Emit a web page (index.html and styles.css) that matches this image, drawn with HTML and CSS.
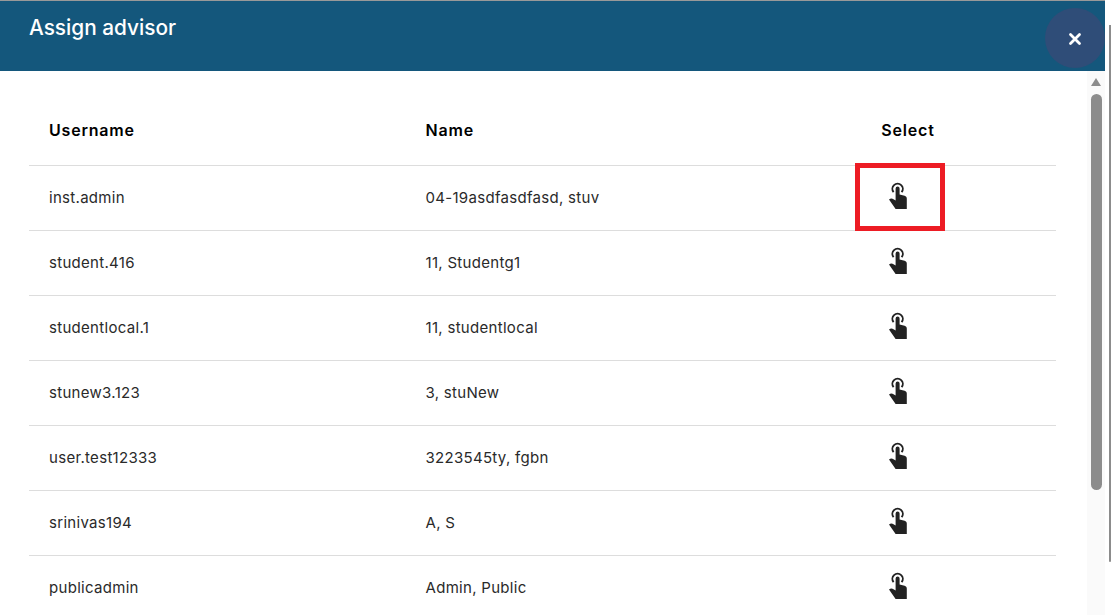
FILE: index.html
```html
<!DOCTYPE html>
<html lang="en">
<head>
<meta charset="utf-8">
<title>Assign advisor</title>
<link rel="stylesheet" href="styles.css">
</head>
<body>
<div class="modal">
  <header class="modal-header">
    <h1 class="modal-title">Assign advisor</h1>
    <button class="close-btn" aria-label="Close">
      <svg width="14" height="14" viewBox="0 0 14 14"><path d="M2.5 2.5L11.5 11.5M11.5 2.5L2.5 11.5" stroke="#fff" stroke-width="2.8" stroke-linecap="round"/></svg>
    </button>
  </header>
  <div class="modal-main">
    <div class="modal-body">
      <div class="table">
        <div class="row head"><div>Username</div><div>Name</div><div class="sel">Select</div></div>
        <div class="row"><div>inst.admin</div><div>04-19asdfasdfasd, stuv</div><div class="sel"><span class="pick marked"><svg class="hand" viewBox="0 0 22 28"><use href="#hand"/></svg></span></div></div>
        <div class="row"><div>student.416</div><div>11, Studentg1</div><div class="sel"><span class="pick"><svg class="hand" viewBox="0 0 22 28"><use href="#hand"/></svg></span></div></div>
        <div class="row"><div>studentlocal.1</div><div>11, studentlocal</div><div class="sel"><span class="pick"><svg class="hand" viewBox="0 0 22 28"><use href="#hand"/></svg></span></div></div>
        <div class="row"><div>stunew3.123</div><div>3, stuNew</div><div class="sel"><span class="pick"><svg class="hand" viewBox="0 0 22 28"><use href="#hand"/></svg></span></div></div>
        <div class="row"><div>user.test12333</div><div>3223545ty, fgbn</div><div class="sel"><span class="pick"><svg class="hand" viewBox="0 0 22 28"><use href="#hand"/></svg></span></div></div>
        <div class="row"><div>srinivas194</div><div>A, S</div><div class="sel"><span class="pick"><svg class="hand" viewBox="0 0 22 28"><use href="#hand"/></svg></span></div></div>
        <div class="row"><div>publicadmin</div><div>Admin, Public</div><div class="sel"><span class="pick"><svg class="hand" viewBox="0 0 22 28"><use href="#hand"/></svg></span></div></div>
      </div>
    </div>
    <div class="scroll-track">
      <span class="scroll-arrow"></span>
      <span class="scroll-thumb"></span>
    </div>
  </div>
</div>
<div class="page-scroll"></div>
<svg class="defs" width="0" height="0">
  <symbol id="hand" viewBox="0 0 22 28">
    <path d="M6.6 10.2A5.2 5.2 0 1 1 14.6 10.2" fill="none" stroke="#222" stroke-width="1.9"/>
    <path d="M8.6 16V6.6a2 2 0 0 1 4 0V12.6l5 1.2c1.3.4 2.2 1.3 2.2 2.6V27H8.6L2 17.6c1.5-1.3 3-1.4 4.5-.4l2.1 1.4z" fill="#222"/>
  </symbol>
</svg>
</body>
</html>
```
FILE: styles.css
```css
html, body {
  margin: 0;
  height: 100%;
  overflow: hidden;
  background: #fff;
}
body {
  display: flex;
  font-family: "Inter", "Liberation Sans", sans-serif;
  color: #222;
}
.defs {
  position: absolute;
}
.modal {
  width: 1105px;
  display: flex;
  flex-direction: column;
  height: 615px;
}
.modal-header {
  position: relative;
  height: 70px;
  flex: none;
  background: #14577c;
  border-top: 1px solid #999;
  padding: 0 29px;
  display: flex;
  align-items: flex-start;
}
.modal-title {
  margin: 14px 0 0;
  font-size: 20.8px;
  line-height: 26px;
  font-weight: 500;
  color: #fff;
}
.close-btn {
  position: absolute;
  right: 0;
  top: 7px;
  width: 60px;
  height: 60px;
  border: 0;
  border-radius: 50%;
  background: #2f4d78;
  display: flex;
  align-items: center;
  justify-content: center;
  padding: 2px 0 0;
}
.modal-main {
  flex: 1;
  display: flex;
  min-height: 0;
}
.modal-body {
  flex: 1;
  padding: 30px 31px 0 29px;
  overflow: hidden;
}
.table {
  display: flex;
  flex-direction: column;
}
.row {
  display: grid;
  grid-template-columns: 376.5px 1fr 200px;
  height: 65px;
  align-items: center;
  border-bottom: 1px solid #ddd;
  box-sizing: border-box;
  padding: 0 48px 2px 20px;
  font-size: 15px;
  letter-spacing: 0.3px;
  color: #2a2a2a;
}
.row.head {
  padding-bottom: 6px;
  font-weight: 600;
  font-size: 16px;
  letter-spacing: 0.8px;
  color: #000;
}
.sel {
  display: flex;
  justify-content: center;
  text-align: center;
}
.pick {
  position: relative;
  display: flex;
  margin-right: 21px;
  margin-top: -3px;
}
.hand {
  width: 22px;
  height: 28px;
}
.marked::after {
  content: "";
  position: absolute;
  left: -32px;
  top: -19px;
  width: 90px;
  height: 68px;
  box-sizing: border-box;
  border: 5px solid #ed1c24;
}
.scroll-track {
  width: 18px;
  flex: none;
  background: #fafafa;
  display: flex;
  flex-direction: column;
  align-items: center;
  padding-top: 7px;
}
.scroll-arrow {
  width: 0;
  height: 0;
  border-left: 5px solid transparent;
  border-right: 5px solid transparent;
  border-bottom: 8px solid #8c8c8c;
}
.scroll-thumb {
  margin-top: 8px;
  width: 11px;
  height: 396px;
  border-radius: 6px;
  background: #8c8c8c;
}
.page-scroll {
  width: 2px;
  margin-left: 4px;
  margin-top: 25px;
  height: 537px;
  background: #8c8c8c;
  border-radius: 0 0 2px 2px;
}
```
